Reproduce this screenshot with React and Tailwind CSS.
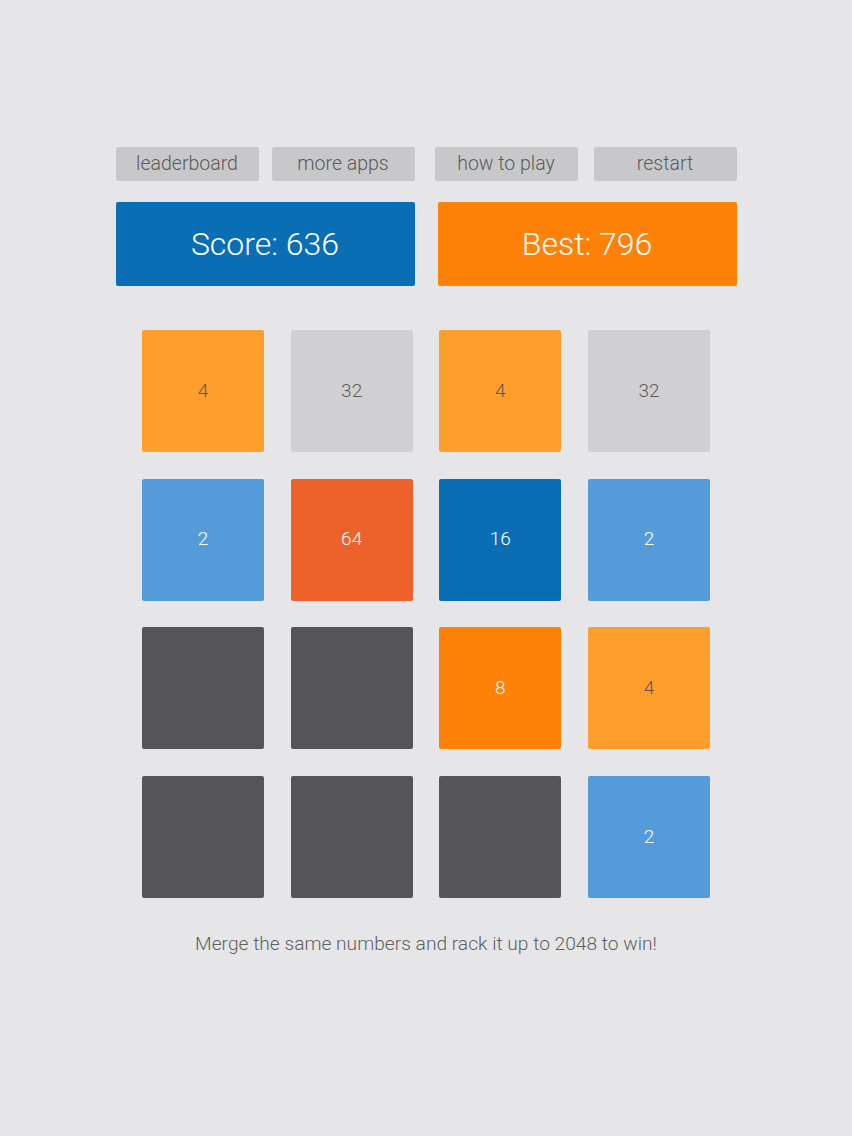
export default function App() {
  const tiles = [
    { v: "4", bg: "bg-[#fe9e2d]", t: "text-[#5a5a5c]" },
    { v: "32", bg: "bg-[#d0d0d2]", t: "text-[#5a5a5c]" },
    { v: "4", bg: "bg-[#fe9e2d]", t: "text-[#5a5a5c]" },
    { v: "32", bg: "bg-[#d0d0d2]", t: "text-[#5a5a5c]" },
    { v: "2", bg: "bg-[#539bd9]", t: "text-white" },
    { v: "64", bg: "bg-[#ec622a]", t: "text-white" },
    { v: "16", bg: "bg-[#0a6eb5]", t: "text-white" },
    { v: "2", bg: "bg-[#539bd9]", t: "text-white" },
    { v: "", bg: "bg-[#555557]", t: "text-white" },
    { v: "", bg: "bg-[#555557]", t: "text-white" },
    { v: "8", bg: "bg-[#fe8108]", t: "text-white" },
    { v: "4", bg: "bg-[#fe9e2d]", t: "text-[#5a5a5c]" },
    { v: "", bg: "bg-[#555557]", t: "text-white" },
    { v: "", bg: "bg-[#555557]", t: "text-white" },
    { v: "", bg: "bg-[#555557]", t: "text-white" },
    { v: "2", bg: "bg-[#539bd9]", t: "text-white" },
  ];
  const btn =
    "w-[143px] h-[34px] bg-[#c8c8ca] rounded-[2px] flex items-center justify-center text-[19.5px] text-[#5a5a5c] font-light";
  return (
    <div
      className="w-[852px] h-[1136px] bg-[#e6e6e8] flex flex-col items-center"
      style={{ fontFamily: "Roboto, 'Liberation Sans', sans-serif" }}
    >
      <div className="w-[621px] mt-[147px] flex justify-between">
        <div className="flex gap-[13px]">
          <div className={btn}>leaderboard</div>
          <div className={btn}>more apps</div>
        </div>
        <div className="flex gap-[16px]">
          <div className={btn}>how to play</div>
          <div className={btn}>restart</div>
        </div>
      </div>
      <div className="w-[621px] mt-[21px] flex justify-between">
        <div className="w-[299px] h-[84px] bg-[#0a6eb5] rounded-[2px] flex items-center justify-center text-white text-[32px] font-light">
          Score: 636
        </div>
        <div className="w-[299px] h-[84px] bg-[#fe8108] rounded-[2px] flex items-center justify-center text-white text-[32px] font-light">
          Best: 796
        </div>
      </div>
      <div className="w-[568px] mt-[44px] grid grid-cols-[repeat(4,122px)] gap-x-[26.67px] gap-y-[26.67px]">
        {tiles.map((t, i) => (
          <div
            key={i}
            className={`w-[122px] h-[122px] rounded-[2px] flex items-center justify-center text-[19px] font-light ${t.bg} ${t.t}`}
          >
            {t.v}
          </div>
        ))}
      </div>
      <div className="mt-[34px] text-[19.2px] leading-[24px] text-[#5f5f61] font-light">
        Merge the same numbers and rack it up to 2048 to win!
      </div>
    </div>
  );
}
